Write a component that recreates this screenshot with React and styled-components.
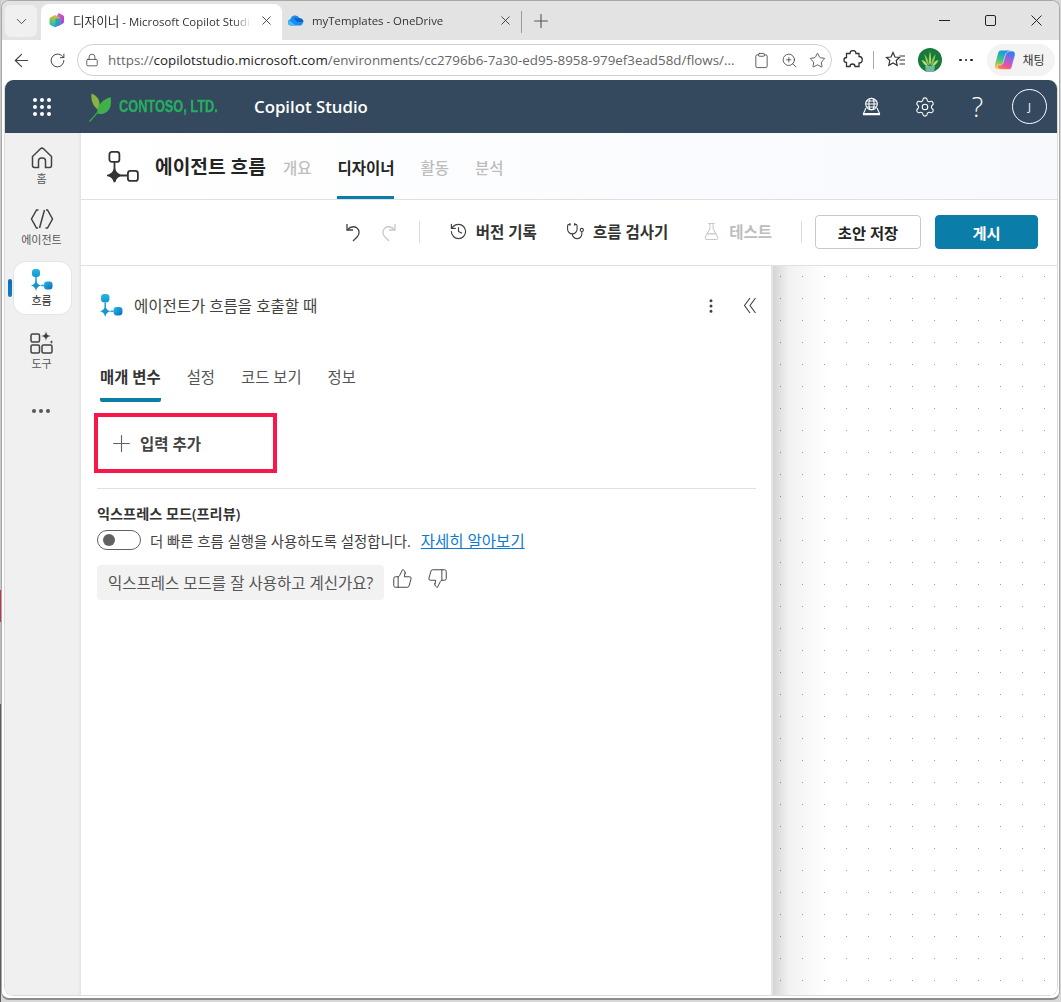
import React from 'react';
import styled, { createGlobalStyle } from 'styled-components';
import {
  ArrowLeft,
  ChevronDown,
  Clipboard,
  EllipsisVertical,
  FlaskConical,
  History,
  Lock,
  Plus,
  RotateCw,
  Settings,
  Star,
  Stethoscope,
  ThumbsDown,
  ThumbsUp,
  X,
  ZoomIn,
} from 'lucide-react';

const FONT = '"Open Sans", "Noto Sans CJK KR", sans-serif';
const TEAL = '#0a7ea8';

const GlobalStyle = createGlobalStyle`
  html, body {
    margin: 0;
    padding: 0;
    background: #fff;
    font-family: ${FONT};
    overflow: hidden;
  }
  * { box-sizing: border-box; }
`;

const Desktop = styled.div`
  width: 1061px;
  height: 1002px;
  padding: 0 1px 0 1px;
  background-color: #d8d8d8;
  background-repeat: no-repeat;
  background-size: 1px 100%;
  background-image: linear-gradient(
    to bottom,
    #c9c9c9 0 590px,
    #c8324c 590px 622px,
    #bcbcbc 622px 704px,
    #5c5c5c 704px
  );
`;

const Window = styled.div`
  height: 1000px;
  display: flex;
  flex-direction: column;
  background: #fff;
  border: 1px solid #a8a8a8;
  border-bottom: 2px solid #8c8c8c;
  border-radius: 8px;
  overflow: hidden;
`;

/* browser chrome */
const TabStrip = styled.div`
  height: 39px;
  flex: none;
  display: flex;
  align-items: flex-end;
  padding-left: 3px;
  background: #e3e3e3;
`;

const TabMenu = styled.div`
  width: 32px;
  height: 32px;
  margin: 0 4px 3px 0;
  display: flex;
  align-items: center;
  justify-content: center;
  border-radius: 6px;
  background: #f0f0f0;
  color: #444;
`;

const Tab = styled.div`
  width: ${(p) => (p.$active ? '241px' : '239px')};
  height: 36px;
  flex: none;
  display: flex;
  align-items: center;
  padding: 0 8px 4px ${(p) => (p.$active ? '8px' : '5px')};
  gap: 8px;
  font-size: 11.4px;
  color: #333;
  border-radius: 8px 8px 0 0;
  background: ${(p) => (p.$active ? '#fff' : 'transparent')};
`;

const TabTitle = styled.span`
  flex: 1;
  white-space: nowrap;
  overflow: hidden;
  mask-image: linear-gradient(to right, #000 90%, transparent);
`;

const TabLocalName = styled.span`
  font-size: 12.6px;
`;

const TabDivider = styled.div`
  width: 1px;
  height: 22px;
  margin: 0 0 7px 0;
  background: #9a9a9a;
`;

const NewTab = styled.div`
  width: 40px;
  height: 36px;
  display: flex;
  align-items: center;
  justify-content: center;
  margin-left: -1px;
  padding-bottom: 3px;
  color: #555;
`;

const WindowControls = styled.div`
  margin-left: auto;
  height: 39px;
  display: flex;
  align-items: center;
  color: #222;
`;

const WindowButton = styled.div`
  width: 46px;
  display: flex;
  justify-content: center;
`;

const AddressRow = styled.div`
  height: 40px;
  flex: none;
  display: flex;
  align-items: center;
  padding: 0 0 0 1px;
  color: #444;
`;

const NavButton = styled.div`
  width: 36px;
  height: 32px;
  flex: none;
  margin-right: ${(p) => p.$gap}px;
  display: flex;
  align-items: center;
  justify-content: center;
`;

const AddressBar = styled.div`
  width: 755px;
  height: 32px;
  flex: none;
  display: flex;
  align-items: center;
  padding: 0 5px 0 7px;
  border: 1px solid #d0d0d0;
  border-radius: 16px;
  background: #fff;
`;

const Url = styled.span`
  flex: 1;
  margin-left: 9px;
  font-size: 13.36px;
  color: #666;
  white-space: nowrap;
  b {
    font-weight: 400;
    color: #222;
  }
`;

const UrlIcons = styled.div`
  display: flex;
  align-items: center;
  gap: 11px;
`;

const BrowserTools = styled.div`
  display: flex;
  flex: none;
  align-items: center;
  margin-left: 11px;
`;

const ToolDivider = styled.div`
  width: 1px;
  height: 18px;
  margin: 0 11px 0 10px;
  background: #a8a8a8;
`;

const ProfileSlot = styled.div`
  margin-left: 12px;
  display: flex;
`;

const MoreDots = styled.div`
  margin: 0 14px 0 17px;
  display: flex;
  gap: 3px;
  span {
    width: 2.5px;
    height: 2.5px;
    border-radius: 50%;
    background: #222;
  }
`;

const ChatPill = styled.div`
  width: 68px;
  height: 32px;
  flex: none;
  display: flex;
  align-items: center;
  gap: 7px;
  padding-left: 7px;
  border-radius: 16px;
  background: #f3f3f3;
  font-size: 12px;
  color: #333;
  white-space: nowrap;
`;

/* app frame */
const AppFrame = styled.div`
  flex: 1;
  min-height: 0;
  margin: 0 1px 2px 2px;
  display: flex;
  flex-direction: column;
  border-radius: 9px;
  border: 1px solid #dcdcdc;
  border-top: 0;
  overflow: hidden;
`;

const AppHeader = styled.header`
  height: 53px;
  flex: none;
  display: flex;
  align-items: center;
  background: #34495e;
  color: #fff;
`;

const Waffle = styled.div`
  width: 18px;
  margin-left: 28px;
  display: grid;
  grid-template-columns: repeat(3, 4px);
  gap: 3px;
  span {
    width: 4px;
    height: 4px;
    border-radius: 50%;
    background: #fff;
  }
`;

const Logo = styled.div`
  display: flex;
  align-items: center;
  margin-left: 38px;
`;

// condensed wordmark: no narrow face is installed, so the bold face is squeezed
const LogoText = styled.span`
  display: block;
  width: 99px;
  margin-left: 6px;
  font-family: "Liberation Sans", sans-serif;
  font-size: 17px;
  font-weight: 700;
  -webkit-text-stroke: 0.4px #27ae60;
  color: #27ae60;
  white-space: nowrap;
  transform: scaleX(0.75);
  transform-origin: left center;
`;

const ProductName = styled.span`
  margin-left: 36px;
  font-size: 16.8px;
  font-weight: 600;
  white-space: nowrap;
`;

const HeaderTools = styled.div`
  margin-left: auto;
  display: flex;
  align-items: center;
  padding-right: 10px;
`;

const HeaderButton = styled.div`
  width: 53px;
  height: 36px;
  display: flex;
  align-items: center;
  justify-content: center;
`;

const Question = styled.span`
  font-size: 27px;
  font-weight: 300;
`;

const Avatar = styled.div`
  width: 35px;
  height: 35px;
  margin-left: 8px;
  display: flex;
  align-items: center;
  justify-content: center;
  border: 1px solid #fff;
  border-radius: 50%;
  font-size: 11px;
`;

const Body = styled.div`
  flex: 1;
  min-height: 0;
  display: flex;
`;

/* left rail */
const Rail = styled.nav`
  width: 76px;
  flex: none;
  display: flex;
  flex-direction: column;
  align-items: center;
  gap: 9px;
  padding: 7px 1px 0 0;
  background: #f0f0f0;
  box-shadow: inset -3px 0 4px -3px #d4d4d4;
`;

const RailItem = styled.div`
  position: relative;
  width: 57px;
  height: 52px;
  display: flex;
  flex-direction: column;
  align-items: center;
  padding: 7px 2px 0 0;
  gap: 1px;
  font-size: 11px;
  color: ${(p) => (p.$active ? '#242424' : '#555')};
  white-space: nowrap;
  border-radius: 12px;
  background: ${(p) => (p.$active ? '#fff' : 'transparent')};
  box-shadow: ${(p) => (p.$active ? '0 0 0 1px #e6e6e6' : 'none')};
`;

const ActiveMark = styled.span`
  position: absolute;
  left: -6px;
  top: 17px;
  width: 4px;
  height: 18px;
  border-radius: 2px;
  background: linear-gradient(#0f6cbd, #0f7fc4);
`;

const RailDots = styled.div`
  margin: 25px 3px 0 0;
  display: flex;
  gap: 3px;
  span {
    width: 4px;
    height: 4px;
    border-radius: 50%;
    background: #555;
  }
`;

const Main = styled.main`
  flex: 1;
  min-width: 0;
  display: flex;
  flex-direction: column;
  background: #fff;
`;

const PageHead = styled.div`
  height: 67px;
  flex: none;
  display: flex;
  align-items: center;
  padding: 0 0 0 26px;
  border-bottom: 1px solid #e0e0e0;
  background: linear-gradient(to right, #fff, #f7f9fd);
`;

const PageTitle = styled.h1`
  margin: 0 0 0 15px;
  font-size: 19.2px;
  font-weight: 700;
  color: #242424;
  white-space: nowrap;
`;

const PageTabs = styled.div`
  height: 66px;
  display: flex;
  gap: 26px;
  margin-left: 17px;
`;

const PageTab = styled.div`
  height: 66px;
  display: flex;
  align-items: center;
  font-size: 15.5px;
  font-weight: ${(p) => (p.$active ? 700 : 500)};
  color: ${(p) => (p.$active ? '#242424' : '#bdbdbd')};
  border-bottom: 3px solid ${(p) => (p.$active ? TEAL : 'transparent')};
  padding-top: 5px;
`;

const ActionBar = styled.div`
  height: 66px;
  flex: none;
  display: flex;
  align-items: center;
  justify-content: flex-end;
  padding: 0 19px 2px 0;
  border-bottom: 1px solid #e0e0e0;
`;

const IconAction = styled.div`
  width: 36px;
  display: flex;
  justify-content: center;
  color: ${(p) => (p.$disabled ? '#c8c8c8' : '#424242')};
`;

const BarDivider = styled.div`
  width: 1px;
  height: 22px;
  margin: ${(p) => p.$margin};
  background: #dcdcdc;
`;

const TextAction = styled.div`
  display: flex;
  align-items: center;
  gap: 8px;
  margin-right: ${(p) => p.$gap}px;
  font-size: 15.5px;
  font-weight: 700;
  color: ${(p) => (p.$disabled ? '#bdbdbd' : '#333')};
  white-space: nowrap;
`;

const Button = styled.button`
  width: ${(p) => p.$width}px;
  height: 34px;
  flex: none;
  margin-left: ${(p) => p.$left}px;
  padding: 0;
  font-family: ${FONT};
  font-size: 15.3px;
  font-weight: 700;
  border-radius: 4px;
  border: 1px solid ${(p) => (p.$primary ? TEAL : '#c8c8c8')};
  color: ${(p) => (p.$primary ? '#fff' : '#242424')};
  background: ${(p) => (p.$primary ? TEAL : '#fff')};
`;

const Workspace = styled.div`
  flex: 1;
  min-height: 0;
  display: flex;
`;

const Panel = styled.section`
  width: 692px;
  flex: none;
  padding: 0 15px 0 16px;
  border-right: 2px solid #e4e4e4;
  background: #fff;
`;

const PanelHead = styled.div`
  height: 79px;
  display: flex;
  align-items: center;
  padding: 0 0 0 3px;
`;

const PanelTitle = styled.span`
  margin-left: 11px;
  font-size: 15.5px;
  color: #424242;
  white-space: nowrap;
`;

const PanelTools = styled.div`
  margin: 0 -1px 0 auto;
  display: flex;
  align-items: center;
  gap: 23px;
  color: #424242;
`;

const ParamTabs = styled.div`
  display: flex;
  gap: 26px;
  margin: 15px 0 0 3px;
  height: 42px;
`;

const ParamTab = styled.div`
  height: 42px;
  padding-top: 5px;
  font-size: 15.4px;
  font-weight: ${(p) => (p.$active ? 700 : 400)};
  color: ${(p) => (p.$active ? '#333' : '#555')};
  border-bottom: 4px solid ${(p) => (p.$active ? TEAL : 'transparent')};
  border-radius: 0 0 2px 2px;
  white-space: nowrap;
`;

const AddInput = styled.div`
  width: 183px;
  height: 60px;
  margin: 11px 0 0 -3px;
  display: flex;
  align-items: center;
  gap: 5px;
  padding: 0 0 0 10px;
  border: 4px solid #f7174a;
  font-size: 15.5px;
  font-weight: 700;
  color: #424242;
`;

const Divider = styled.hr`
  margin: 15px 0 0 0;
  border: 0;
  border-top: 1px solid #e0e0e0;
`;

const ExpressTitle = styled.div`
  margin-top: 15px;
  font-size: 14.2px;
  line-height: 20px;
  font-weight: 600;
  color: #333;
`;

const ExpressRow = styled.div`
  margin-top: 5px;
  height: 22px;
  display: flex;
  align-items: center;
  font-size: 14.4px;
  color: #424242;
  white-space: nowrap;
`;

const Toggle = styled.div`
  width: 44px;
  height: 20px;
  margin-right: 9px;
  padding-left: 5px;
  display: flex;
  align-items: center;
  border: 1px solid #616161;
  border-radius: 10px;
  &::before {
    content: '';
    width: 12px;
    height: 12px;
    border-radius: 50%;
    background: #616161;
  }
`;

const LearnMore = styled.a`
  margin-left: 10px;
  font-size: 15.5px;
  color: #0f7ad4;
  text-decoration: underline;
`;

const FeedbackRow = styled.div`
  margin-top: 14px;
  display: flex;
  align-items: flex-start;
  gap: 8px;
`;

const FeedbackChip = styled.div`
  height: 35px;
  display: flex;
  align-items: center;
  padding: 0 11px;
  border-radius: 4px;
  background: #f2f2f2;
  font-size: 15.5px;
  color: #555;
  white-space: nowrap;
`;

const Thumbs = styled.div`
  display: flex;
  gap: 14px;
  margin-top: 3px;
  color: #424242;
`;

const Canvas = styled.div`
  flex: 1;
  background-color: #fff;
  background-image:
    linear-gradient(to right, rgba(0, 0, 0, 0.17), rgba(0, 0, 0, 0.05) 16px, rgba(0, 0, 0, 0) 56px),
    radial-gradient(circle at 0.5px 0.5px, #9a9a9a 0.5px, transparent 0.9px);
  background-size: 100% 100%, 22px 22px;
  background-position: 0 0, 7px 10px;
`;

const CopilotStudioIcon = () => (
  <svg width="16" height="16" viewBox="0 0 16 16">
    <defs>
      <linearGradient id="cs-a" x1="0" y1="0" x2="1" y2="1">
        <stop offset="0" stopColor="#f25cc0" />
        <stop offset="1" stopColor="#a23fe0" />
      </linearGradient>
      <linearGradient id="cs-b" x1="0" y1="0" x2="0" y2="1">
        <stop offset="0" stopColor="#f7b23e" />
        <stop offset=".5" stopColor="#5ccb6a" />
        <stop offset="1" stopColor="#1fa8e0" />
      </linearGradient>
    </defs>
    <path d="M9.500 1 14 3.200c.6.300 1 .9 1 1.500v5.300c0 .6-.4 1.200-1 1.500L9.500 14 6 8Z" fill="url(#cs-a)" />
    <path d="M6 3 10.500 5.300c.6.300 1 .9 1 1.500v4.600c0 .6-.4 1.200-1 1.500L6 15.200 1.500 12.900c-.6-.3-1-.9-1-1.500V6.800c0-.6.4-1.200 1-1.500Z" fill="url(#cs-b)" />
    <path d="M6.500 7 11.500 6v5.500c0 .6-.4 1.100-1 1.400L6.500 15Z" fill="#1f8fe0" opacity=".75" />
  </svg>
);

const OneDriveIcon = () => (
  <svg width="17" height="12" viewBox="0 0 17 12">
    <path d="M3.600 11.500A3.200 3.200 0 0 1 3.400 5.200 5 5 0 0 1 12.600 4.200 3.800 3.800 0 0 1 13.600 11.500Z" fill="#1a8cf0" />
    <path d="M7 4 12.600 4.200A3.800 3.800 0 0 1 16.600 8L10 8Z" fill="#0f5fd0" />
    <path d="M3.600 11.500A3.200 3.200 0 0 1 2 6.200L9 11.500Z" fill="#43bdf5" />
  </svg>
);

const ProfileIcon = () => (
  <svg width="24" height="24" viewBox="0 0 24 24">
    <circle cx="12" cy="12" r="12" fill="#177a3a" />
    <path d="M7 18h10l-1 6H8Z" fill="#6fb89f" />
    <path d="M12 18C10 13 11 8 12 3c1 5 2 10 0 15Z" fill="#a7d46f" />
    <path d="M11 18C8 15 7 11 6.500 6c2.500 3 4.500 7 4.500 12Z" fill="#8cc65a" />
    <path d="M13 18c3-3 4-7 4.500-12-2.500 3-4.500 7-4.500 12Z" fill="#8cc65a" />
    <path d="M10 18.500C7 17.500 5 15.500 3.500 12c3.500.5 5.500 3 6.500 6.500Z" fill="#b9df85" />
    <path d="M14 18.500c3-1 5-3 6.500-6.500-3.500.5-5.500 3-6.500 6.500Z" fill="#b9df85" />
  </svg>
);

const CopilotIcon = () => (
  <svg width="22" height="22" viewBox="0 0 22 22">
    <defs>
      <linearGradient id="cp-l" x1="0.6" y1="0" x2="0.3" y2="1">
        <stop offset="0" stopColor="#1b8fe8" />
        <stop offset=".5" stopColor="#34c58a" />
        <stop offset="1" stopColor="#f7c52e" />
      </linearGradient>
      <linearGradient id="cp-r" x1="0.7" y1="0" x2="0.3" y2="1">
        <stop offset="0" stopColor="#2a7de8" />
        <stop offset=".45" stopColor="#a35fe0" />
        <stop offset=".8" stopColor="#f0568c" />
        <stop offset="1" stopColor="#f9883a" />
      </linearGradient>
    </defs>
    <path d="M6.500 1.500H15C17 1.500 18 2.500 18.500 4L19 6H15.500C14 6 13.200 7 12.800 8.500L11 15C10 18.500 8 20 5 20H4C1.500 20 .5 18 1 15.500L4 4.500C4.500 2.500 5.500 1.500 6.500 1.500Z" fill="url(#cp-l)" />
    <path d="M15.500 20.500H7C5 20.500 4 19.500 3.500 18L3 16H6.500C8 16 8.800 15 9.200 13.500L11 7C12 3.500 14 2 17 2H18C20.500 2 21.500 4 21 6.500L18 17.500C17.500 19.500 16.500 20.500 15.500 20.500Z" fill="url(#cp-r)" stroke="#f3f3f3" strokeWidth=".6" />
  </svg>
);

const LeafLogo = () => (
  <svg width="24" height="30" viewBox="0 0 24 30">
    <path d="M2.500 1.500C7 3 10 6.500 10.500 11 10.700 13.500 10 16 8.800 17.500 4.500 14.500 1.500 8.500 2.500 1.500Z" fill="#86b544" />
    <path d="M21.500 5C23 12 21.500 19 15 21.500 12 22.500 9.500 22 8.300 21 8 15 11 9 21.500 5Z" fill="#3fb04a" />
    <path d="M.500 29.500C4 26 9 20 14 13" fill="none" stroke="#3fb04a" strokeWidth="1.200" />
  </svg>
);

const HelpDeskGlobe = () => (
  <svg width="19" height="19" viewBox="0 0 19 19" fill="none" stroke="#fff" strokeWidth="1.100">
    <circle cx="9.500" cy="7" r="5.800" />
    <ellipse cx="9.500" cy="7" rx="2.600" ry="5.800" />
    <path d="M3.700 7h11.600M4.500 4h10M4.500 10h10" />
    <path d="M4 11 1.500 16.500h16L15 11" />
    <path d="M1 17.500h17" strokeWidth="1.400" />
  </svg>
);

const UndoIcon = ({ flip }) => (
  <svg
    width="18"
    height="20"
    viewBox="0 0 18 20"
    fill="none"
    stroke="currentColor"
    strokeWidth="1.300"
    style={flip ? { transform: 'scaleX(-1)' } : undefined}
  >
    <path d="M3 2v6h6" />
    <path d="M3 8c3-3 7-4 10-2 3 2.500 2.500 6.500 0 9l-4 4" />
  </svg>
);

const DoubleChevron = () => (
  <svg width="14" height="17" viewBox="0 0 14 17" fill="none" stroke="currentColor" strokeWidth="1.100">
    <path d="M7 1 1.500 8.500 7 16M12.500 1 7 8.500l5.500 7.500" />
  </svg>
);

// flow glyph: node on top, star in the middle, node on the right
const FlowOutline = () => (
  <svg width="33" height="33" viewBox="0 0 33 33" fill="none" stroke="#333" strokeWidth="1.800">
    <rect x="2.400" y="1.900" width="10" height="10" rx="2.500" />
    <path d="M7.500 12v7M14 25.500h6" />
    <path d="M7.500 19c.7 3.400 2.400 5.400 6.500 6.500-4.100 1.100-5.800 3.100-6.500 6.500-.7-3.400-2.400-5.400-6.500-6.500 4.100-1.100 5.800-3.100 6.500-6.500Z" fill="#333" />
    <rect x="20.900" y="20.900" width="10" height="10" rx="2.500" />
  </svg>
);

const FlowColor = ({ size }) => (
  <svg width={size} height={size} viewBox="0 0 22 22">
    <defs>
      <linearGradient id={`fl-${size}`} x1="0" y1="0" x2="1" y2="1">
        <stop offset="0" stopColor="#22b8e6" />
        <stop offset="1" stopColor="#0f6cbd" />
      </linearGradient>
      <linearGradient id={`ft-${size}`} x1="0" y1="0" x2="0" y2="1">
        <stop offset="0" stopColor="#22b8e6" />
        <stop offset="1" stopColor="#1596cf" />
      </linearGradient>
    </defs>
    <rect x="1" y="0" width="8" height="8" rx="3" fill={`url(#ft-${size})`} />
    <path d="M5 8v5M10 16.500h3" stroke="#1ea5dc" strokeWidth="1.500" />
    <path d="M5 11c.6 3 2 4.600 5 5.500-3 .9-4.400 2.500-5 5.500-.6-3-2-4.600-5-5.500 3-.9 4.400-2.500 5-5.500Z" fill="#1596cf" />
    <rect x="13" y="12.500" width="8.500" height="8" rx="3" fill={`url(#fl-${size})`} />
  </svg>
);

const HomeIcon = () => (
  <svg width="22" height="22" viewBox="0 0 22 22" fill="none" stroke="#424242" strokeWidth="1.500">
    <path d="M1.500 9.500 9.500 1.800c.9-.8 2.100-.8 3 0l8 7.700v9c0 1.200-.9 2-2 2h-4v-6.500c0-1.700-1.300-3-3-3h-1c-1.700 0-3 1.300-3 3v6.500h-4c-1.100 0-2-.8-2-2Z" />
  </svg>
);

const AgentIcon = () => (
  <svg width="24" height="22" viewBox="0 0 24 22" fill="none" stroke="#424242" strokeWidth="1.500">
    <path d="M8.500 2H6.500L1.500 11l5 9H8" />
    <path d="M15.500 20h2l5-9-5-9H16" />
    <path d="M14.500 2 9.500 20" />
  </svg>
);

const ToolsIcon = () => (
  <svg width="24" height="24" viewBox="0 0 24 24" fill="none" stroke="#424242" strokeWidth="1.500">
    <rect x="1" y="4" width="8.500" height="8" rx="1.500" />
    <rect x="1" y="15" width="8.500" height="8" rx="1.500" />
    <rect x="12" y="15" width="10" height="8" rx="1.500" />
    <path d="M16 1c.5 3.500 1.500 4.500 5 5-3.500.5-4.500 1.500-5 5-.5-3.500-1.500-4.500-5-5 3.500-.5 4.500-1.500 5-5Z" fill="#424242" stroke="none" />
    <path d="M21.500 10c.2 1.300.7 1.800 2 2-1.300.2-1.800.7-2 2-.2-1.300-.7-1.800-2-2 1.300-.2 1.800-.7 2-2Z" fill="#424242" stroke="none" />
  </svg>
);

const PuzzleIcon = () => (
  <svg width="20" height="20" viewBox="0 0 20 20" fill="none" stroke="#333" strokeWidth="1.300">
    <path d="M7 3.500a3 3 0 0 1 6 0h3v3a3 3 0 0 1 0 6.500v3.500h-4a2.500 2.500 0 0 0-5 0H3.500v-4a2.500 2.500 0 0 1 0-5V3.500Z" />
  </svg>
);

const FavoritesIcon = () => (
  <svg width="21" height="20" viewBox="0 0 21 20" fill="none" stroke="#333" strokeWidth="1.200">
    <path d="M8 2.500 10 7l4.500.5-3.300 3 1 4.800L8 13l-4.200 2.300 1-4.800-3.300-3L6 7Z" />
    <path d="M14.500 6H20M14.500 10H20M14.500 14H20" />
  </svg>
);

const railItems = [
  { label: '홈', icon: <HomeIcon /> },
  { label: '에이전트', icon: <AgentIcon /> },
  { label: '흐름', icon: <FlowColor size={22} />, active: true },
  { label: '도구', icon: <ToolsIcon /> },
];

const App = () => (
  <Desktop>
    <GlobalStyle />
    <Window>
      <TabStrip>
        <TabMenu>
          <ChevronDown size={17} strokeWidth={1.3} />
        </TabMenu>
        <Tab $active>
          <CopilotStudioIcon />
          <TabTitle>
            <TabLocalName>디자이너</TabLocalName> - Microsoft Copilot Studio
          </TabTitle>
          <X size={15} strokeWidth={1.4} />
        </Tab>
        <Tab>
          <OneDriveIcon />
          <TabTitle>myTemplates - OneDrive</TabTitle>
          <X size={15} strokeWidth={1.4} />
        </Tab>
        <TabDivider />
        <NewTab>
          <Plus size={22} strokeWidth={1.2} />
        </NewTab>
        <WindowControls>
          <WindowButton>
            <svg width="11" height="11" viewBox="0 0 11 11" stroke="#222" strokeWidth="1">
              <path d="M0 5.500h11" />
            </svg>
          </WindowButton>
          <WindowButton>
            <svg width="11" height="11" viewBox="0 0 11 11" fill="none" stroke="#222" strokeWidth="1">
              <rect x=".5" y=".5" width="10" height="10" rx="1.500" />
            </svg>
          </WindowButton>
          <WindowButton>
            <svg width="11" height="11" viewBox="0 0 11 11" stroke="#222" strokeWidth="1">
              <path d="M.5.500l10 10M10.500.500l-10 10" />
            </svg>
          </WindowButton>
        </WindowControls>
      </TabStrip>

      <AddressRow>
        <NavButton $gap={0}>
          <ArrowLeft size={21} strokeWidth={1.3} />
        </NavButton>
        <NavButton $gap={2}>
          <RotateCw size={17} strokeWidth={1.4} />
        </NavButton>
        <AddressBar>
          <Lock size={14} strokeWidth={1.4} />
          <Url>
            https://<b>copilotstudio.microsoft.com</b>/environments/cc2796b6-7a30-ed95-8958-979ef3ead58d/flows/...
          </Url>
          <UrlIcons>
            <Clipboard size={17} strokeWidth={1.2} />
            <ZoomIn size={17} strokeWidth={1.2} />
            <Star size={17} strokeWidth={1.2} />
          </UrlIcons>
        </AddressBar>
        <BrowserTools>
          <PuzzleIcon />
          <ToolDivider />
          <FavoritesIcon />
          <ProfileSlot>
            <ProfileIcon />
          </ProfileSlot>
          <MoreDots>
            <span />
            <span />
            <span />
          </MoreDots>
          <ChatPill>
            <CopilotIcon />
            채팅
          </ChatPill>
        </BrowserTools>
      </AddressRow>

      <AppFrame>
        <AppHeader>
          <Waffle>
            {Array.from({ length: 9 }, (_, i) => (
              <span key={i} />
            ))}
          </Waffle>
          <Logo>
            <LeafLogo />
            <LogoText>CONTOSO, LTD.</LogoText>
          </Logo>
          <ProductName>Copilot Studio</ProductName>
          <HeaderTools>
            <HeaderButton>
              <HelpDeskGlobe />
            </HeaderButton>
            <HeaderButton>
              <Settings size={22} strokeWidth={1.2} />
            </HeaderButton>
            <HeaderButton>
              <Question>?</Question>
            </HeaderButton>
            <Avatar>J</Avatar>
          </HeaderTools>
        </AppHeader>

        <Body>
          <Rail>
            {railItems.map((item) => (
              <RailItem key={item.label} $active={item.active}>
                {item.active && <ActiveMark />}
                {item.icon}
                <span>{item.label}</span>
              </RailItem>
            ))}
            <RailDots>
              <span />
              <span />
              <span />
            </RailDots>
          </Rail>

          <Main>
            <PageHead>
              <FlowOutline />
              <PageTitle>에이전트 흐름</PageTitle>
              <PageTabs>
                <PageTab>개요</PageTab>
                <PageTab $active>디자이너</PageTab>
                <PageTab>활동</PageTab>
                <PageTab>분석</PageTab>
              </PageTabs>
            </PageHead>

            <ActionBar>
              <IconAction>
                <UndoIcon />
              </IconAction>
              <IconAction $disabled>
                <UndoIcon flip />
              </IconAction>
              <BarDivider $margin="0 29px 0 12px" />
              <TextAction $gap={29}>
                <History size={19} strokeWidth={1.5} color="#424242" />
                버전 기록
              </TextAction>
              <TextAction $gap={34}>
                <Stethoscope size={19} strokeWidth={1.4} color="#424242" />
                흐름 검사기
              </TextAction>
              <TextAction $gap={0} $disabled>
                <FlaskConical size={19} strokeWidth={1.3} color="#c8c8c8" />
                테스트
              </TextAction>
              <BarDivider $margin="0 0 0 29px" />
              <Button $width={106} $left={13}>
                초안 저장
              </Button>
              <Button $width={103} $left={14} $primary>
                게시
              </Button>
            </ActionBar>

            <Workspace>
              <Panel>
                <PanelHead>
                  <FlowColor size={23} />
                  <PanelTitle>에이전트가 흐름을 호출할 때</PanelTitle>
                  <PanelTools>
                    <EllipsisVertical size={18} strokeWidth={2} />
                    <DoubleChevron />
                  </PanelTools>
                </PanelHead>
                <ParamTabs>
                  <ParamTab $active>매개 변수</ParamTab>
                  <ParamTab>설정</ParamTab>
                  <ParamTab>코드 보기</ParamTab>
                  <ParamTab>정보</ParamTab>
                </ParamTabs>
                <AddInput>
                  <Plus size={27} strokeWidth={1} color="#616161" />
                  입력 추가
                </AddInput>
                <Divider />
                <ExpressTitle>익스프레스 모드(프리뷰)</ExpressTitle>
                <ExpressRow>
                  <Toggle />더 빠른 흐름 실행을 사용하도록 설정합니다.
                  <LearnMore>자세히 알아보기</LearnMore>
                </ExpressRow>
                <FeedbackRow>
                  <FeedbackChip>익스프레스 모드를 잘 사용하고 계신가요?</FeedbackChip>
                  <Thumbs>
                    <ThumbsUp size={21} strokeWidth={1.1} />
                    <ThumbsDown size={21} strokeWidth={1.1} />
                  </Thumbs>
                </FeedbackRow>
              </Panel>
              <Canvas />
            </Workspace>
          </Main>
        </Body>
      </AppFrame>
    </Window>
  </Desktop>
);

export default App;
